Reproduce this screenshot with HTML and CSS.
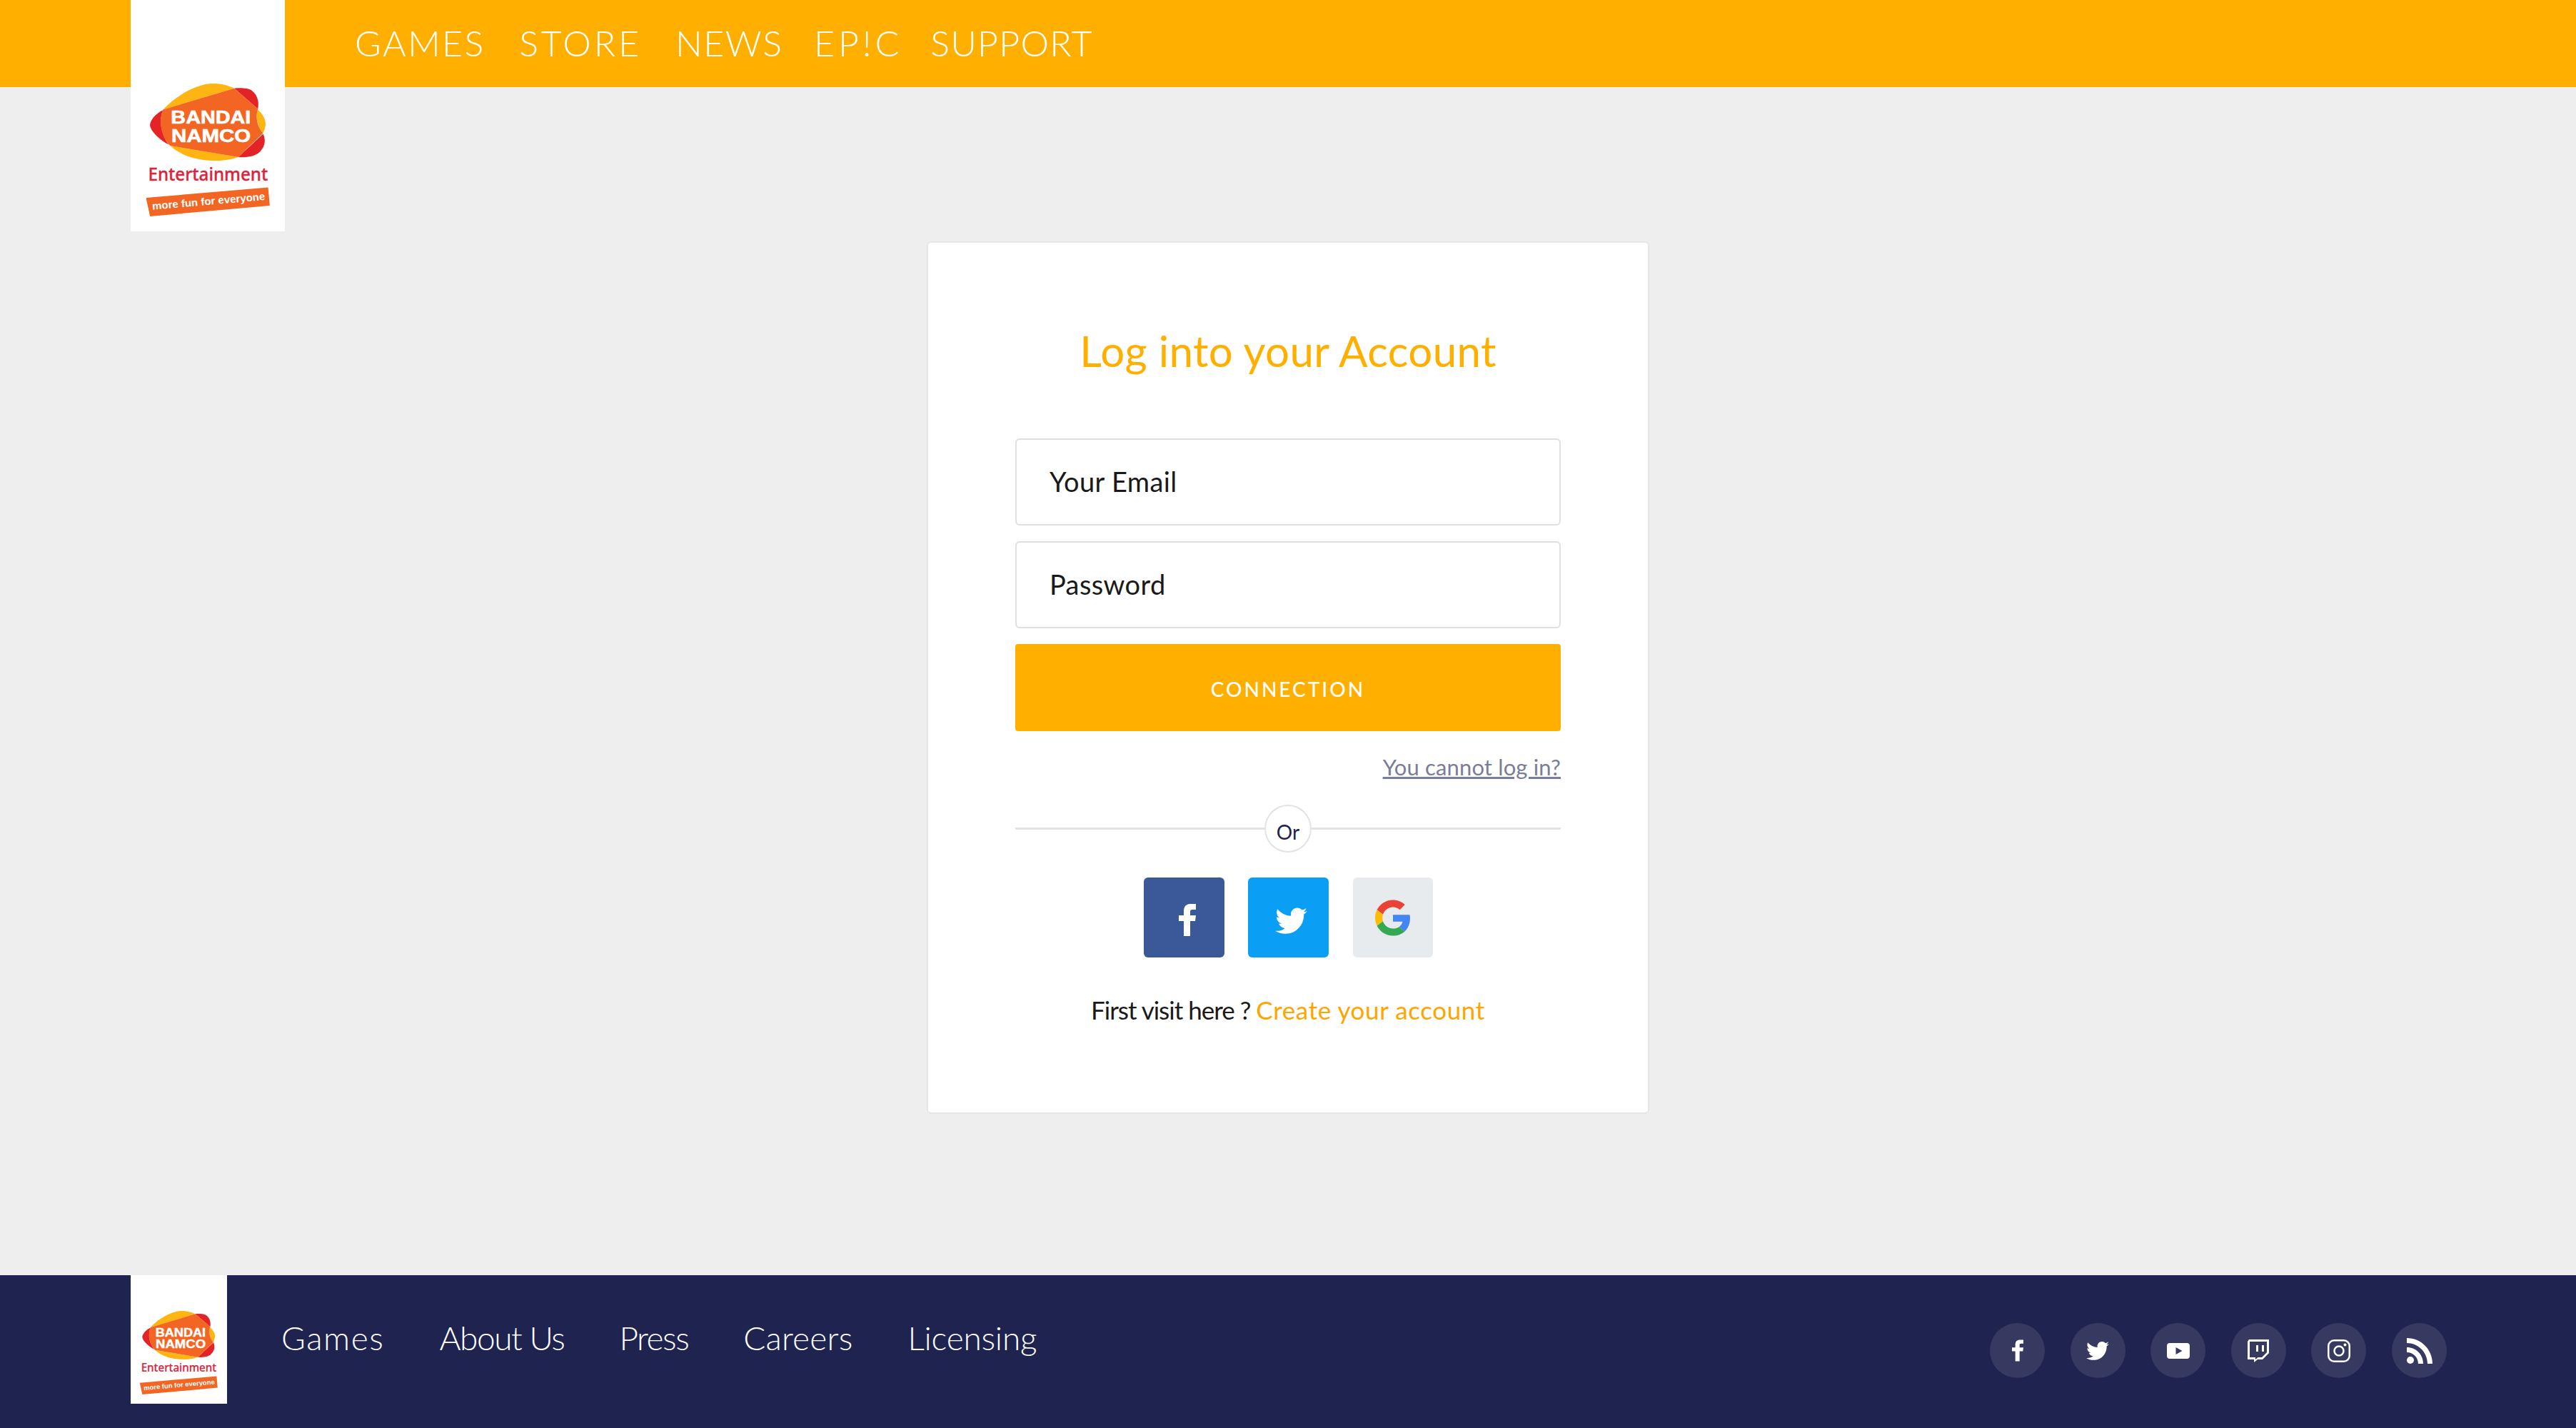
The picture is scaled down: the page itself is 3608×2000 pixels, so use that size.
FILE: index.html
```html
<!DOCTYPE html>
<html lang="en">
<head>
<meta charset="utf-8">
<title>Log into your Account</title>
<link rel="stylesheet" href="styles.css">
</head>
<body>
<div class="page">
  <header class="topbar">
    <a class="brand" href="#">
      <svg class="brand-logo" viewBox="105 80 520 560">
        <path fill="#ffb511" d="M175 190C230 130 320 80 385 80C420 80 450 88 475 100Z"/>
        <path fill="#e42326" d="M475 100C500 98 535 98 550 110C575 130 580 160 575 187Z"/>
        <path fill="#ffb511" d="M572 190C595 205 610 235 607 255C605 270 600 282 595 290C575 265 565 225 572 190Z"/>
        <path fill="#e42326" d="M597 292C610 320 605 350 575 375C550 390 520 392 492 390Z"/>
        <path fill="#ffb511" d="M205 342C250 385 320 405 400 405C440 405 470 398 492 390Z"/>
        <path fill="#e42326" d="M175 192C145 205 120 235 120 255C120 280 165 320 200 338C170 300 155 240 175 192Z"/>
        <path fill="#f26522" d="M175 190L475 100L575 187C562 225 575 265 596 290L492 390L205 342C165 300 155 240 175 190Z"/>
        <text class="logo-bold" x="208" y="250" font-size="76" textLength="337" lengthAdjust="spacingAndGlyphs">BANDAI</text>
        <text class="logo-bold" x="210" y="328" font-size="76" textLength="335" lengthAdjust="spacingAndGlyphs">NAMCO</text>
        <text class="logo-ent" x="112" y="488" font-size="74" textLength="505" lengthAdjust="spacingAndGlyphs">Entertainment</text>
        <path fill="#f26522" d="M103 562L618 518L625 595L120 640Z"/>
        <text class="logo-tag" x="130" y="612" font-size="44" textLength="478" lengthAdjust="spacingAndGlyphs" transform="rotate(-5 130 612)">more fun for everyone</text>
      </svg>
    </a>
    <nav class="topnav">
      <a class="tn-games" href="#">GAMES</a>
      <a class="tn-store" href="#">STORE</a>
      <a class="tn-news" href="#">NEWS</a>
      <a class="tn-epic" href="#">EP!C</a>
      <a class="tn-support" href="#">SUPPORT</a>
    </nav>
  </header>

  <main class="content">
    <form class="card">
      <h1 class="title">Log into your Account</h1>
      <input class="field" type="text" placeholder="Your Email">
      <input class="field" type="password" placeholder="Password">
      <button class="submit" type="button">CONNECTION</button>
      <a class="forgot" href="#">You cannot log in?</a>
      <div class="divider"><span class="divider-label">Or</span></div>
      <div class="socials">
        <a class="social social-fb" href="#">
          <svg class="social-f" viewBox="0 0 24 45"><path fill="#fff" d="M7 45V24H0v-8h7v-6C7 3 11 0 17 0h7v8h-5c-2.500 0-3 1-3 3v5h8l-1 8h-7v21z"/></svg>
        </a>
        <a class="social social-tw" href="#">
          <svg class="social-t" viewBox="0 30 512 436"><path fill="#fff" d="M459.37 151.716c.325 4.548.325 9.097.325 13.645 0 138.72-105.583 298.558-298.558 298.558-59.452 0-114.68-17.219-161.137-47.106 8.447.974 16.568 1.299 25.34 1.299 49.055 0 94.213-16.568 130.274-44.832-46.132-.975-84.792-31.188-98.112-72.772 6.498.974 12.995 1.624 19.818 1.624 9.421 0 18.843-1.3 27.614-3.573-48.081-9.747-84.143-51.98-84.143-102.985v-1.299c13.969 7.797 30.214 12.67 47.431 13.319-28.264-18.843-46.781-51.005-46.781-87.391 0-19.492 5.197-37.36 14.294-52.954 51.655 63.675 129.3 105.258 216.365 109.807-1.624-7.797-2.599-15.918-2.599-24.04 0-57.828 46.782-104.934 104.934-104.934 30.213 0 57.502 12.67 76.67 33.137 23.715-4.548 46.456-13.32 66.599-25.34-7.798 24.366-24.366 44.833-46.132 57.827 21.117-2.273 41.584-8.122 60.426-16.243-14.292 20.791-32.161 39.308-52.628 54.253z"/></svg>
        </a>
        <a class="social social-g" href="#">
          <svg class="social-gi" viewBox="0 0 48 48">
            <path fill="#ea4335" d="M24 9.5c3.54 0 6.71 1.22 9.21 3.6l6.85-6.85C35.9 2.38 30.47 0 24 0 14.62 0 6.51 5.38 2.56 13.22l7.98 6.19C12.43 13.72 17.74 9.5 24 9.5z"/>
            <path fill="#4285f4" d="M46.98 24.55c0-1.57-.15-3.09-.38-4.55H24v9.02h12.94c-.58 2.96-2.26 5.48-4.78 7.18l7.73 6c4.51-4.18 7.09-10.36 7.09-17.65z"/>
            <path fill="#fbbc05" d="M10.53 28.59c-.48-1.45-.76-2.99-.76-4.59s.27-3.14.76-4.59l-7.98-6.19C.92 16.46 0 20.12 0 24c0 3.88.92 7.54 2.56 10.78l7.97-6.19z"/>
            <path fill="#34a853" d="M24 48c6.48 0 11.93-2.13 15.89-5.81l-7.73-6c-2.15 1.45-4.92 2.3-8.16 2.3-6.26 0-11.57-4.22-13.47-9.91l-7.98 6.19C6.51 42.62 14.62 48 24 48z"/>
          </svg>
        </a>
      </div>
      <p class="signup">First visit here ? <a href="#">Create your account</a></p>
    </form>
  </main>

  <footer class="footer">
    <a class="footer-brand" href="#">
      <svg class="footer-logo" viewBox="105 80 520 560">
        <path fill="#ffb511" d="M175 190C230 130 320 80 385 80C420 80 450 88 475 100Z"/>
        <path fill="#e42326" d="M475 100C500 98 535 98 550 110C575 130 580 160 575 187Z"/>
        <path fill="#ffb511" d="M572 190C595 205 610 235 607 255C605 270 600 282 595 290C575 265 565 225 572 190Z"/>
        <path fill="#e42326" d="M597 292C610 320 605 350 575 375C550 390 520 392 492 390Z"/>
        <path fill="#ffb511" d="M205 342C250 385 320 405 400 405C440 405 470 398 492 390Z"/>
        <path fill="#e42326" d="M175 192C145 205 120 235 120 255C120 280 165 320 200 338C170 300 155 240 175 192Z"/>
        <path fill="#f26522" d="M175 190L475 100L575 187C562 225 575 265 596 290L492 390L205 342C165 300 155 240 175 190Z"/>
        <text class="logo-bold" x="208" y="250" font-size="76" textLength="337" lengthAdjust="spacingAndGlyphs">BANDAI</text>
        <text class="logo-bold" x="210" y="328" font-size="76" textLength="335" lengthAdjust="spacingAndGlyphs">NAMCO</text>
        <text class="logo-ent" x="112" y="488" font-size="74" textLength="505" lengthAdjust="spacingAndGlyphs">Entertainment</text>
        <path fill="#f26522" d="M103 562L618 518L625 595L120 640Z"/>
        <text class="logo-tag" x="130" y="612" font-size="44" textLength="478" lengthAdjust="spacingAndGlyphs" transform="rotate(-5 130 612)">more fun for everyone</text>
      </svg>
    </a>
    <nav class="footer-nav">
      <a class="fn-games" href="#">Games</a>
      <a class="fn-about" href="#">About Us</a>
      <a class="fn-press" href="#">Press</a>
      <a class="fn-careers" href="#">Careers</a>
      <a class="fn-licensing" href="#">Licensing</a>
    </nav>
    <div class="follow">
      <a class="follow-item" href="#">
        <svg class="fi-f" viewBox="0 0 24 45"><path fill="#fff" d="M7 45V24H0v-8h7v-6C7 3 11 0 17 0h7v8h-5c-2.500 0-3 1-3 3v5h8l-1 8h-7v21z"/></svg>
      </a>
      <a class="follow-item" href="#">
        <svg class="fi-t" viewBox="0 30 512 436"><path fill="#fff" d="M459.37 151.716c.325 4.548.325 9.097.325 13.645 0 138.72-105.583 298.558-298.558 298.558-59.452 0-114.68-17.219-161.137-47.106 8.447.974 16.568 1.299 25.34 1.299 49.055 0 94.213-16.568 130.274-44.832-46.132-.975-84.792-31.188-98.112-72.772 6.498.974 12.995 1.624 19.818 1.624 9.421 0 18.843-1.3 27.614-3.573-48.081-9.747-84.143-51.98-84.143-102.985v-1.299c13.969 7.797 30.214 12.67 47.431 13.319-28.264-18.843-46.781-51.005-46.781-87.391 0-19.492 5.197-37.36 14.294-52.954 51.655 63.675 129.3 105.258 216.365 109.807-1.624-7.797-2.599-15.918-2.599-24.04 0-57.828 46.782-104.934 104.934-104.934 30.213 0 57.502 12.67 76.67 33.137 23.715-4.548 46.456-13.32 66.599-25.34-7.798 24.366-24.366 44.833-46.132 57.827 21.117-2.273 41.584-8.122 60.426-16.243-14.292 20.791-32.161 39.308-52.628 54.253z"/></svg>
      </a>
      <a class="follow-item" href="#">
        <svg class="fi-y" viewBox="0 0 32 22"><path fill="#fff" fill-rule="evenodd" d="M4 0h24c2.500 0 4 1.500 4 4v14c0 2.500-1.500 4-4 4H4c-2.500 0-4-1.500-4-4V4c0-2.500 1.500-4 4-4zM12.500 6v10l9-5z"/></svg>
      </a>
      <a class="follow-item" href="#">
        <svg class="fi-s" viewBox="0 0 30 32"><path fill="#fff" fill-rule="evenodd" d="M2 0h28v19l-9 9h-7l-5 4v-4H0V3zM3 3v22h8v3l3.500-3H20l7-7V3zM12 8h3v9h-3zM20 8h3v9h-3z"/></svg>
      </a>
      <a class="follow-item" href="#">
        <svg class="fi-s2" viewBox="0 0 32 32"><rect x="1.250" y="1.250" width="29.500" height="29.500" rx="8" fill="none" stroke="#fff" stroke-width="2.500"/><circle cx="16" cy="16" r="6.500" fill="none" stroke="#fff" stroke-width="2.500"/><circle cx="24.500" cy="7.500" r="2" fill="#fff"/></svg>
      </a>
      <a class="follow-item" href="#">
        <svg class="fi-r" viewBox="0 0 36 36"><path fill="#fff" d="M0 0C20 0 36 16 36 36H29C29 20 16 7 0 7zM0 13C13 13 23 23 23 36H16C16 27 9 20 0 20z"/><circle cx="5" cy="31" r="5" fill="#fff"/></svg>
      </a>
    </div>
  </footer>
</div>
</body>
</html>
```
FILE: styles.css
```css
* { box-sizing: border-box; }
html, body { margin: 0; padding: 0; }
body { font-family: "Lato", "Liberation Sans", sans-serif; font-weight: 300; background: #eeeeee; color: #1a1a1a; }
a { text-decoration: none; color: inherit; }
.logo-bold { font-family: "Liberation Sans", sans-serif; font-weight: 700; fill: #fff; stroke: #fff; stroke-width: 2px; }
.logo-tag { font-family: "Liberation Sans", sans-serif; font-weight: 700; fill: #fff; }
.logo-ent { font-family: "Noto Sans", sans-serif; font-weight: 500; fill: #d9263f; stroke: #d9263f; stroke-width: 1px; }

.page { height: 2000px; display: flex; flex-direction: column; overflow: hidden; }

.topbar { height: 122px; background: #ffaf00; padding-left: 183px; display: flex; align-items: flex-start; flex: none; }
.brand { width: 216px; height: 324px; background: #fff; flex: none; display: flex; justify-content: center; padding-top: 117px; position: relative; z-index: 1; }
.brand-logo { width: 173px; height: 186px; flex: none; }
.topnav { display: flex; gap: 39px; margin-left: 98px; height: 122px; padding-bottom: 2px; align-items: center; color: #fff; font-family: "Lato", sans-serif; font-weight: 300; font-size: 50px; line-height: 1; }
.tn-games { letter-spacing: 2.4px; margin-right: 8.600px; }
.tn-store { letter-spacing: 3.800px; margin-right: 8.200px; }
.tn-news { letter-spacing: 1.600px; margin-right: 4.400px; }
.tn-epic { letter-spacing: 5px; }
.tn-support { letter-spacing: 1.300px; }

.content { flex: 1; display: flex; justify-content: center; padding-top: 216px; }
.card { width: 1012px; height: 1222px; background: #fff; border: 2px solid #e6e6e6; border-radius: 6px; padding: 0 122px; display: flex; flex-direction: column; }
.title { margin: 113px 0 0; height: 76px; font-size: 60px; line-height: 76px; font-weight: 400; letter-spacing: .4px; color: #ffaf00; text-align: center; }
.field { display: block; width: 100%; height: 122px; margin-top: 22px; padding: 0 46px 2px; border: 2px solid #dfdfdf; border-radius: 6px; background: #fff; font: 400 38px "Lato", sans-serif; letter-spacing: .4px; color: #1a1a1a; outline: none; }
.title + .field { margin-top: 85px; }
.field::placeholder { color: #1a1a1a; opacity: 1; }
.submit { display: block; width: 100%; height: 122px; margin-top: 22px; padding-top: 4px; border: 0; border-radius: 4px; background: #ffaf00; color: #fff; font: 500 28px "Lato", sans-serif; letter-spacing: 3px; }
.forgot { align-self: flex-end; margin-top: 32px; font-size: 31px; line-height: 36px; letter-spacing: .15px; font-weight: 400; color: #7a7d99; text-decoration: underline; }
.divider { margin-top: 35px; height: 67px; position: relative; display: flex; justify-content: center; align-items: flex-start; }
.divider::before { content: ""; position: absolute; left: 0; right: 0; top: 32px; height: 3px; background: #e3e3e3; }
.divider-label { position: relative; width: 66px; height: 67px; border: 2px solid #e3e3e3; border-radius: 50%; background: #fff; font-size: 28px; font-weight: 400; line-height: 72px; text-align: center; color: #1e2350; }
.socials { margin-top: 35px; display: flex; justify-content: center; gap: 33px; }
.social { width: 113px; height: 112px; border-radius: 6px; display: flex; align-items: center; justify-content: center; }
.social-fb { background: #3b5998; padding: 7px 0 0 9px; }
.social-tw { background: #0a9ff5; padding: 8px 0 0 9px; }
.social-g { background: #e8ebee; width: 112px; margin-left: 1px; }
.social-f { width: 24px; height: 45px; }
.social-t { width: 45px; height: 38px; }
.social-gi { width: 50px; height: 51px; }
.signup { margin: 51px 0 0; font-size: 35px; font-weight: 400; line-height: 44px; letter-spacing: -1px; text-align: center; white-space: nowrap; }
.signup a { color: #ffa500; letter-spacing: .6px; }

.footer { height: 214px; flex: none; background: #1e2350; padding: 0 181px 0 183px; display: flex; align-items: flex-start; }
.footer-brand { width: 135px; height: 180px; background: #fff; flex: none; display: flex; justify-content: center; padding-top: 50px; }
.footer-logo { width: 109px; height: 117px; flex: none; }
.footer-nav { display: flex; gap: 77px; margin-left: 76px; padding-top: 60px; color: #fff; font-size: 46px; line-height: 56px; }
.fn-games { letter-spacing: 1.6px; }
.fn-about { letter-spacing: -1.4px; }
.fn-press { letter-spacing: -1.5px; }
.fn-careers { letter-spacing: .2px; }
.fn-licensing { letter-spacing: -.2px; }
.follow { margin-left: auto; margin-top: 67px; display: flex; gap: 35.600px; }
.follow-item { width: 77px; height: 77px; border-radius: 50%; background: #363a61; display: flex; align-items: center; justify-content: center; }
.fi-f { width: 16px; height: 31px; }
.fi-t { width: 32px; height: 27px; }
.fi-y { width: 32px; height: 22px; }
.fi-s { width: 30px; height: 32px; }
.fi-s2 { width: 32px; height: 32px; }
.fi-r { width: 36px; height: 36px; }
```
